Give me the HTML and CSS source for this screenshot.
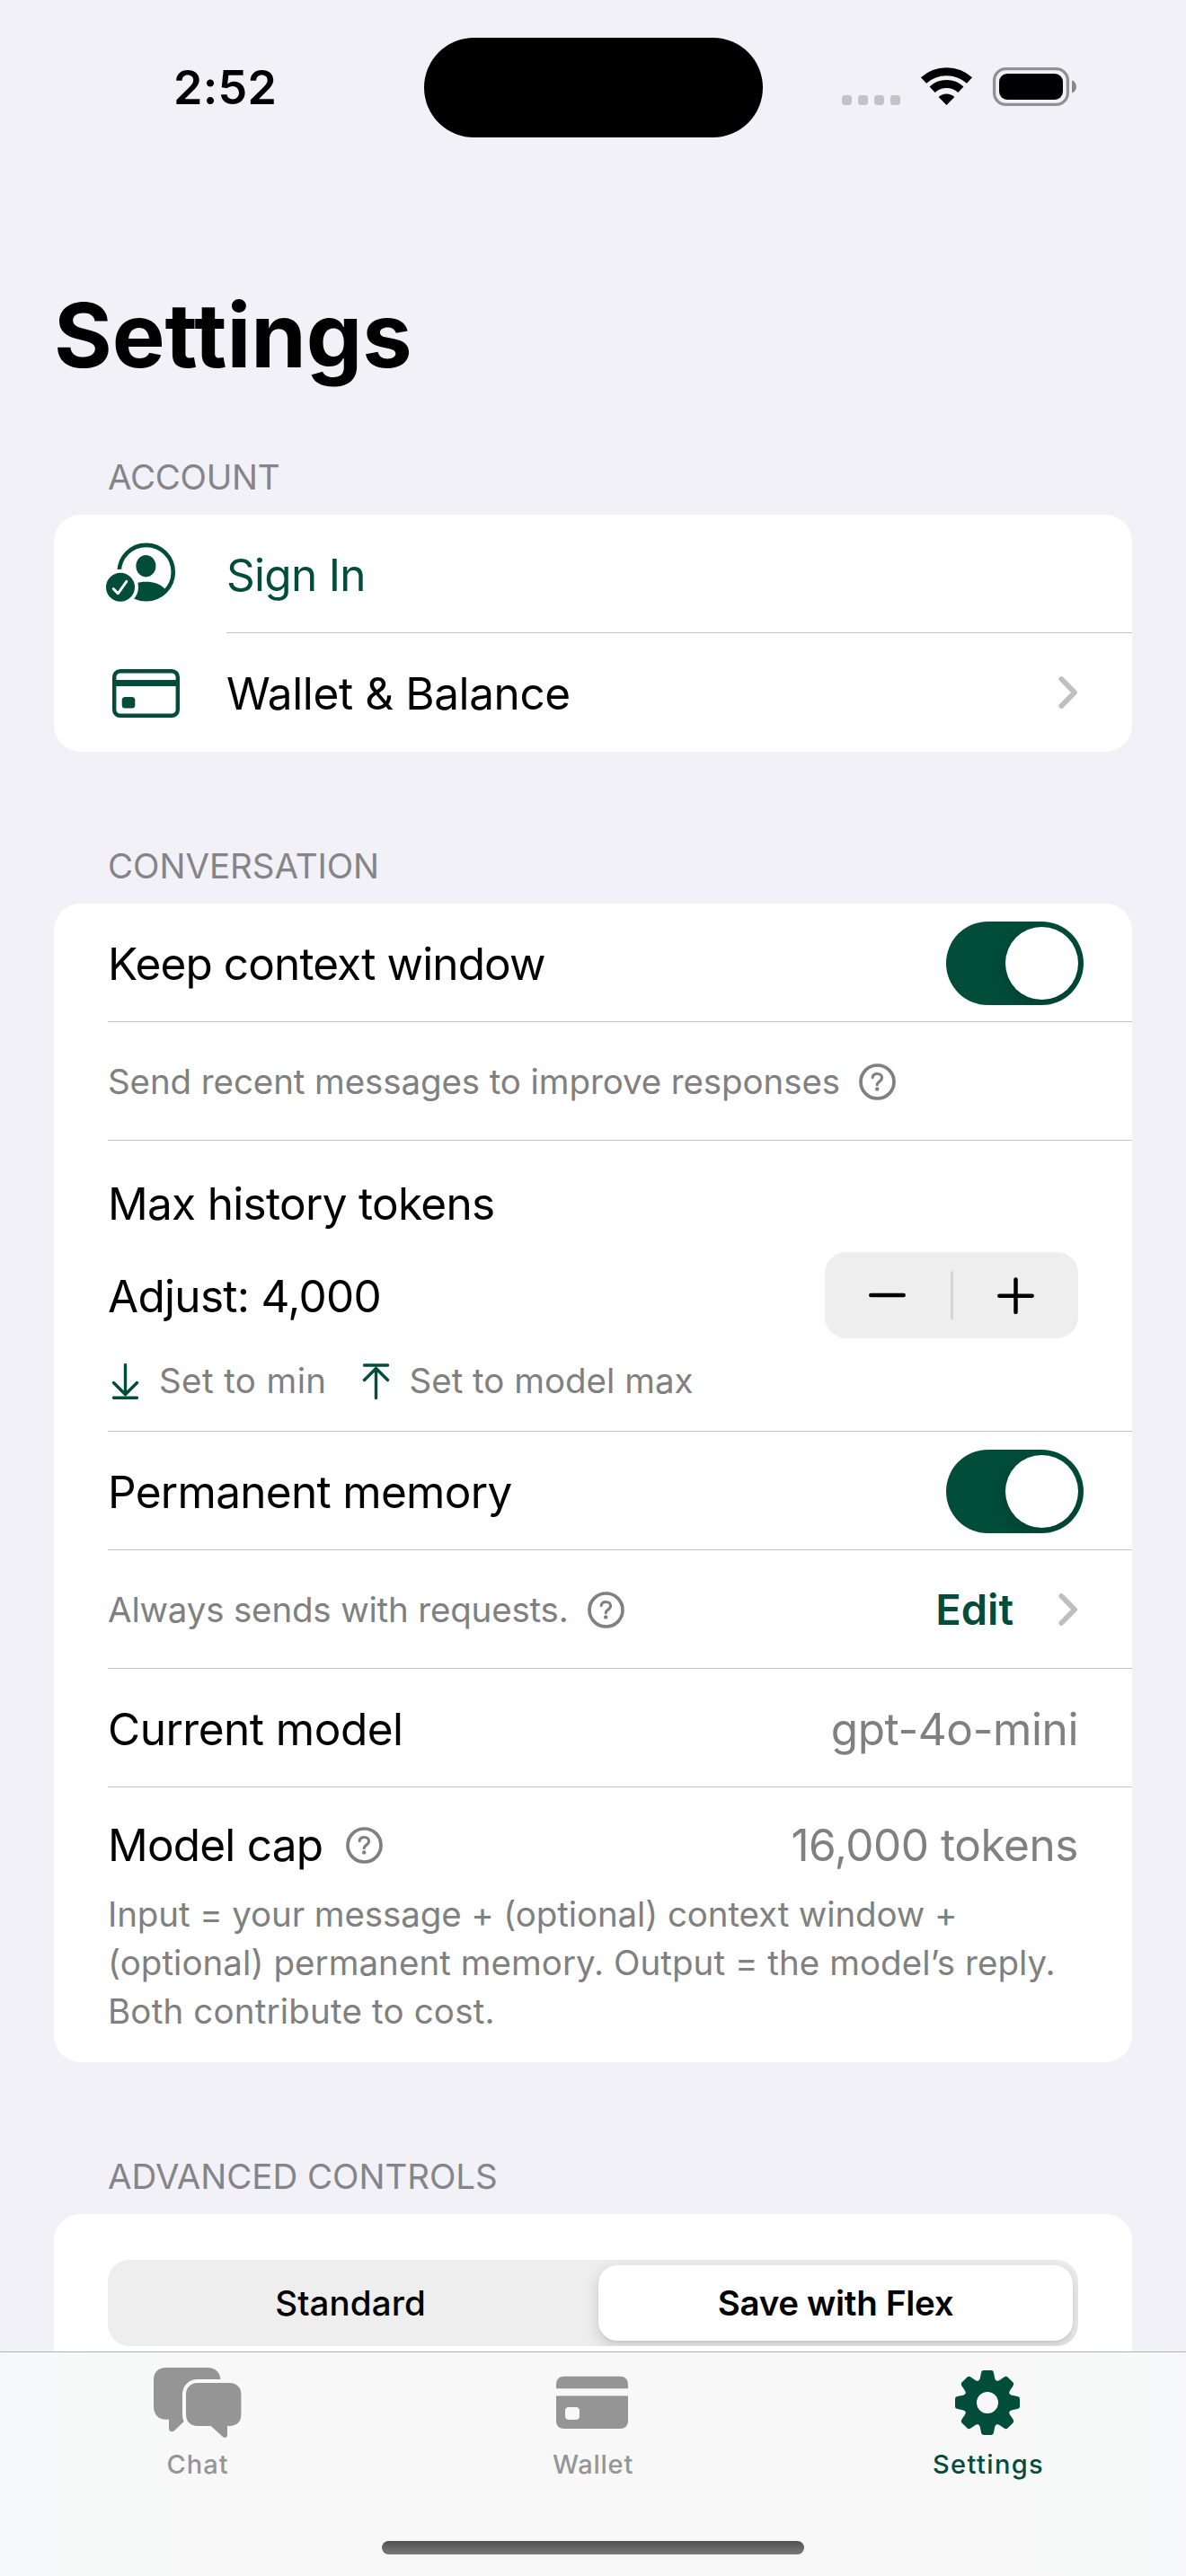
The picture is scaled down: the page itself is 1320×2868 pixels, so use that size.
FILE: index.html
```html
<!DOCTYPE html>
<html lang="en">
<head>
<meta charset="utf-8">
<title>Settings</title>
<link rel="stylesheet" href="styles.css">
</head>
<body>
<svg class="sprite" aria-hidden="true">
  <symbol id="help" viewBox="0 0 41 41">
    <circle cx="20.5" cy="20.5" r="18.5" fill="none" stroke="currentColor" stroke-width="3.7"/>
    <path d="M15.2 15.6C15.4 12.8 17.6 11.5 20.4 11.5C23.4 11.5 25.6 13.2 25.6 15.8C25.6 18 24.4 19 22.8 20.1C21.1 21.2 20.2 22 20.2 23.8" fill="none" stroke="currentColor" stroke-width="3.1" stroke-linecap="round"/>
    <circle cx="20.2" cy="28.4" r="2.2" fill="currentColor"/>
  </symbol>
  <symbol id="chevron" viewBox="0 0 22 38">
    <path d="M3.3 4L18 19L3.3 34" fill="none" stroke="currentColor" stroke-width="5.8" stroke-linecap="round" stroke-linejoin="round"/>
  </symbol>
</svg>
<div class="screen">
  <main class="scroll">
    <header class="status">
      <div class="time">2:52</div>
      <div class="island"></div>
      <svg class="signals" viewBox="937 70 262 54">
        <g fill="#c2c2c7">
          <rect x="937" y="106" width="11" height="11" rx="3.4"/>
          <rect x="955" y="106" width="11" height="11" rx="3.4"/>
          <rect x="973" y="106" width="11" height="11" rx="3.4"/>
          <rect x="991" y="106" width="11" height="11" rx="3.4"/>
        </g>
        <g fill="none" stroke="#000" stroke-width="9">
          <path d="M1028 89.5A38 38 0 0 1 1079 89.5"/>
          <path d="M1037.6 99.8A23.500 23.500 0 0 1 1069.400 99.800"/>
        </g>
        <path d="M1053.5 117L1044.6 108.1A12.8 12.8 0 0 1 1062.4 108.1Z"/>
        <rect x="1106.6" y="76.6" width="81.8" height="39.8" rx="13" fill="none" stroke="#919195" stroke-width="3.3"/>
        <rect x="1112" y="82" width="71" height="29" rx="9"/>
        <path d="M1193 89.5C1199.600 91.500 1199.600 101.500 1193 103.500Z" fill="#87878a"/>
      </svg>
    </header>

    <h1 class="title">Settings</h1>

    <section class="section">
      <h2 class="heading heading-account">ACCOUNT</h2>
      <div class="card">
        <div class="row row-icon">
          <svg class="row-glyph" viewBox="0 0 84 84">
            <circle cx="44.7" cy="39" r="30.1" fill="none" stroke="currentColor" stroke-width="4.6"/>
            <ellipse cx="44.4" cy="32.2" rx="11" ry="12.2" fill="currentColor"/>
            <path d="M66.500 58.500C60 51.700 53 49.700 44.500 49.700C36 49.700 29 51.700 22.500 58.500A30 30 0 0 0 66.500 58.500Z" fill="currentColor"/>
            <circle cx="16" cy="55.700" r="20" fill="#fff"/>
            <circle cx="16" cy="55.700" r="16" fill="currentColor"/>
            <path d="M8.200 57.500L13.300 62.800L22.800 49.300" fill="none" stroke="#fff" stroke-width="2.900" stroke-linecap="round" stroke-linejoin="round"/>
          </svg>
          <div class="cell divided"><span class="label green">Sign In</span></div>
        </div>
        <div class="row row-icon">
          <svg class="row-glyph" viewBox="0 0 84 84">
            <rect x="9.200" y="17.200" width="70.600" height="49.600" rx="6.500" fill="none" stroke="currentColor" stroke-width="4.400"/>
            <rect x="8" y="27" width="73" height="7" fill="currentColor"/>
            <rect x="17.700" y="46" width="14.600" height="12.500" rx="3.500" fill="currentColor"/>
          </svg>
          <div class="cell"><span class="label label-wallet">Wallet &amp; Balance</span><svg class="chevron"><use href="#chevron"/></svg></div>
        </div>
      </div>
    </section>

    <section class="section">
      <h2 class="heading">CONVERSATION</h2>
      <div class="card card-inset">
        <div class="cell divided"><span class="label label-tight">Keep context window</span><span class="toggle"><span class="knob"></span></span></div>
        <div class="cell divided"><span class="note note-tight">Send recent messages to improve responses</span><svg class="help"><use href="#help"/></svg></div>
        <div class="history divided">
          <div class="history-title">Max history tokens</div>
          <div class="adjust">
            <span class="label">Adjust: 4,000</span>
            <div class="stepper">
              <svg viewBox="0 0 41 41"><path d="M2.300 20H38.700"/></svg>
              <span class="stepper-line"></span>
              <svg viewBox="0 0 41 41"><path d="M2.300 20.700H38.700M20.500 2.500V38.900"/></svg>
            </div>
          </div>
          <div class="limits">
            <svg class="limit-glyph" viewBox="0 0 31 42"><path d="M15.500 2.500V35M2.500 22.500L15.500 35.500L28.500 22.500M2.500 39.200H28.500"/></svg>
            <span class="note note-loose">Set to min</span>
            <svg class="limit-glyph limit-next" viewBox="0 0 31 42"><path d="M15.500 39.500V7M2.500 19.500L15.500 6.500L28.500 19.500M2.500 3H28.500"/></svg>
            <span class="note">Set to model max</span>
          </div>
        </div>
        <div class="cell divided"><span class="label">Permanent memory</span><span class="toggle"><span class="knob"></span></span></div>
        <div class="cell divided"><span class="note note-requests">Always sends with requests.</span><svg class="help"><use href="#help"/></svg><span class="edit">Edit</span><svg class="chevron"><use href="#chevron"/></svg></div>
        <div class="cell divided"><span class="label label-model">Current model</span><span class="value">gpt-4o-mini</span></div>
        <div class="cap">
          <div class="cap-line"><span class="cap-label">Model cap</span><svg class="help help-wide"><use href="#help"/></svg><span class="cap-value">16,000 tokens</span></div>
          <p class="explain"><span class="line-a">Input = your message + (optional) context window +</span><br><span class="line-b">(optional) permanent memory. Output = the model’s reply.</span><br><span class="line-c">Both contribute to cost.</span></p>
        </div>
      </div>
    </section>

    <section class="section section-last">
      <h2 class="heading">ADVANCED CONTROLS</h2>
      <div class="card card-segments">
        <div class="segments"><span class="segment">Standard</span><span class="segment selected">Save with Flex</span></div>
      </div>
    </section>
  </main>

  <nav class="tabbar">
    <div class="tabs">
      <div class="tab">
        <svg class="tab-glyph" viewBox="0 0 100 80">
          <path d="M15 1H61C70 1 75.500 6.500 75.500 16V58.700H37L24 71.300C21.500 73.300 18 72 18 69V58.700H15C6 58.700 1 53 1 44V15C1 6 6 1 15 1Z" fill="currentColor"/>
          <path d="M50 18H85C94 18 98.400 23.500 98.400 31V53C98.400 61 94 66 85 66H83V76C83 79 80 80 78 78L64.800 66H50C42 66 37 61 37 53V31C37 23.500 42 18 50 18Z" fill="currentColor" stroke="#f9f9f9" stroke-width="8" paint-order="stroke"/>
        </svg>
        <span class="tab-label tab-chat">Chat</span>
      </div>
      <div class="tab">
        <svg class="tab-glyph" viewBox="0 0 100 80">
          <path d="M9 26.500V20C9 14 12.500 10.700 18 10.700H80C85.500 10.700 89 14 89 20V26.500Z" fill="currentColor"/>
          <path fill-rule="evenodd" d="M9 32.300H89V60C89 66 85.500 69 80 69H18C12.500 69 9 66 9 60ZM23 45C20.500 45 19 46.500 19 49V55C19 57.500 20.500 59 23 59H31C33.500 59 35 57.500 35 55V49C35 46.500 33.500 45 31 45Z" fill="currentColor"/>
          <rect x="9" y="24.300" width="80" height="8" fill="#f8f8f8"/>
        </svg>
        <span class="tab-label tab-wallet">Wallet</span>
      </div>
      <div class="tab active">
        <svg class="tab-glyph" viewBox="0 0 100 80">
          <defs><path id="tooth" d="M-11.500-23C-9-25-8.300-26-7.900-28.500L-7-33.300C-6.600-35.300-5.500-36-4-36H4C5.500-36 6.600-35.300 7-33.300L7.900-28.500C8.300-26 9-25 11.500-23Z"/></defs>
          <g transform="translate(49 40)" fill="currentColor">
            <circle r="19" fill="none" stroke="currentColor" stroke-width="14"/>
            <use href="#tooth"/>
            <use href="#tooth" transform="rotate(45)"/>
            <use href="#tooth" transform="rotate(90)"/>
            <use href="#tooth" transform="rotate(135)"/>
            <use href="#tooth" transform="rotate(180)"/>
            <use href="#tooth" transform="rotate(225)"/>
            <use href="#tooth" transform="rotate(270)"/>
            <use href="#tooth" transform="rotate(315)"/>
          </g>
        </svg>
        <span class="tab-label tab-settings">Settings</span>
      </div>
    </div>
    <div class="home-indicator"></div>
  </nav>
</div>
</body>
</html>
```
FILE: styles.css
```css
* { box-sizing: border-box; }

body {
  margin: 0;
  background: #f2f1f7;
  color: #000;
  font-family: Inter, "Liberation Sans", sans-serif;
  font-size: 49.5px;
  letter-spacing: -0.7px;
}

svg { display: block; flex: none; }
.sprite { display: none; }

.screen {
  display: flex;
  flex-direction: column;
  width: 1320px;
  height: 2868px;
  overflow: hidden;
}

.scroll {
  display: flex;
  flex: 1;
  flex-direction: column;
  min-height: 0;
  overflow: hidden;
}

/* Status bar */
.status {
  display: grid;
  grid-template-columns: 472px 377px 1fr;
  align-items: center;
  flex: none;
  height: 194px;
}
.time { padding: 2px 0 0 193px; font-size: 52px; font-weight: 600; letter-spacing: 0.3px; line-height: 62px; }
.island { height: 111px; border-radius: 56px; background: #000; }
.signals { width: 262px; height: 54px; margin-left: 88px; }

.title {
  flex: none;
  margin: 119px 0 75px;
  padding-left: 60px;
  font-size: 99px;
  font-weight: 700;
  line-height: 120px;
  letter-spacing: -0.1px;
}

/* Grouped list */
.section { flex: none; margin: 0 60px 104px; }
.heading {
  margin: 0;
  padding: 0 60px 19px;
  color: #858589;
  font-size: 38.5px;
  font-weight: 400;
  line-height: 46px;
  letter-spacing: -0.05px;
}
.heading-account { letter-spacing: -0.3px; }
.card { border-radius: 30px; background: #fff; overflow: hidden; }
.card-inset { padding-left: 60px; }

.row { display: flex; align-items: center; }
.row-icon { padding-left: 58px; }
.row-icon .cell { flex: 1; }
.row-glyph { width: 84px; height: 84px; margin: 2px 50px 0 0; color: #024c3a; }

.cell { display: flex; align-items: center; height: 132px; padding-right: 60px; }
.divided { box-shadow: inset 0 -1px #c4c4c6; }
.label { padding-top: 2px; line-height: 60px; }
.label-tight { letter-spacing: -0.88px; }
.label-wallet { letter-spacing: -0.4px; }
.label-model { letter-spacing: -0.5px; }
.green { color: #024c3a; }
.note { color: #808080; font-size: 38.5px; line-height: 52px; letter-spacing: 0; }
.note-tight { letter-spacing: -0.1px; }
.note-requests { letter-spacing: -0.18px; }
.note-loose { letter-spacing: 0.4px; }
.value { margin-left: auto; padding-top: 2px; color: #808080; line-height: 60px; letter-spacing: -0.4px; }
.help { width: 41px; height: 41px; margin-left: 21px; color: #808080; }
.chevron { width: 22px; height: 38px; margin-left: auto; color: #bfbfc1; }
.edit { margin-left: auto; color: #024c3a; font-size: 47px; font-weight: 600; line-height: 60px; letter-spacing: 0; }
.edit + .chevron { margin-left: 50px; }

.toggle {
  display: flex;
  justify-content: flex-end;
  width: 153px;
  height: 93px;
  margin: 0 -6px 0 auto;
  padding: 6px;
  border-radius: 47px;
  background: #024c3a;
  overflow: hidden;
}
.knob { width: 81px; height: 81px; border-radius: 50%; background: #fff; box-shadow: 0 5px 18px rgba(0, 0, 0, 0.18); }

/* History limit */
.history { height: 324px; padding: 40px 60px 0 0; }
.history-title { line-height: 60px; }
.adjust { display: flex; align-items: center; justify-content: space-between; margin-top: 24px; }
.stepper {
  display: flex;
  align-items: center;
  justify-content: space-between;
  width: 282px;
  height: 96px;
  padding: 0 49px;
  border-radius: 24px;
  background: #eee;
}
.stepper svg { width: 41px; height: 41px; fill: none; stroke: #000; stroke-width: 4.5; stroke-linecap: round; }
.stepper-line { width: 3px; height: 54px; border-radius: 2px; background: #d5d5d5; }
.limits { display: flex; align-items: center; gap: 22px; margin-top: 21px; padding-left: 4px; }
.limit-glyph { width: 31px; height: 42px; margin-top: 2px; fill: none; stroke: #024c3a; stroke-width: 3.4; stroke-linecap: round; stroke-linejoin: round; }
.limit-next { margin-left: 17px; }

/* Model cap */
.cap { height: 306px; padding: 34px 60px 0 0; }
.cap-line { display: flex; align-items: center; line-height: 60px; }
.cap-label { letter-spacing: -0.8px; }
.help-wide { margin-left: 26px; }
.cap-value { margin-left: auto; color: #808080; letter-spacing: -0.45px; }
.explain { margin: 20px -30px 0 0; color: #808080; font-size: 38.5px; line-height: 54px; white-space: nowrap; }
.line-a { letter-spacing: -0.11px; }
.line-b { letter-spacing: 0.05px; }
.line-c { letter-spacing: 0.18px; }

/* Segmented control */
.section-last { margin-bottom: 0; }
.card-segments { height: 500px; padding: 51px 60px; }
.segments {
  display: grid;
  grid-template-columns: 1fr 1fr;
  gap: 12px;
  height: 96px;
  padding: 6px;
  border-radius: 24px;
  background: #eee;
  font-size: 38.5px;
  font-weight: 500;
  line-height: 84px;
  letter-spacing: 0.1px;
  text-align: center;
  overflow: hidden;
}
.segment { border-radius: 21px; }
.selected { background: #fff; font-weight: 600; letter-spacing: -0.3px; box-shadow: 0 6px 18px rgba(0, 0, 0, 0.16), 0 2px 3px rgba(0, 0, 0, 0.05); }

/* Tab bar */
.tabbar {
  display: flex;
  flex: none;
  flex-direction: column;
  align-items: center;
  justify-content: space-between;
  height: 250px;
  padding-bottom: 24px;
  border-top: 1px solid #b2b1b6;
  background: linear-gradient(90deg, #f7f8fb 0, #f8f9f9 6%, #f8f8f8 20%, #f8f8f8 85%, #f7f9f8 95%, #f8f8fb 100%);
}
.tabs { display: grid; grid-template-columns: repeat(3, 1fr); width: 100%; padding-top: 16px; }
.tab { display: flex; flex-direction: column; align-items: center; gap: 11px; color: #959595; }
.tab-glyph { width: 100px; height: 80px; }
.tab-label { font-size: 29px; font-weight: 500; line-height: 36px; }
.tab-chat { letter-spacing: 1px; }
.tab-wallet { letter-spacing: 0.75px; }
.tab-settings { letter-spacing: 1.4px; }
.active { color: #024c3a; }
.home-indicator { width: 470px; height: 15px; border-radius: 8px; background: linear-gradient(#505050, #7a7a7a); }
```
